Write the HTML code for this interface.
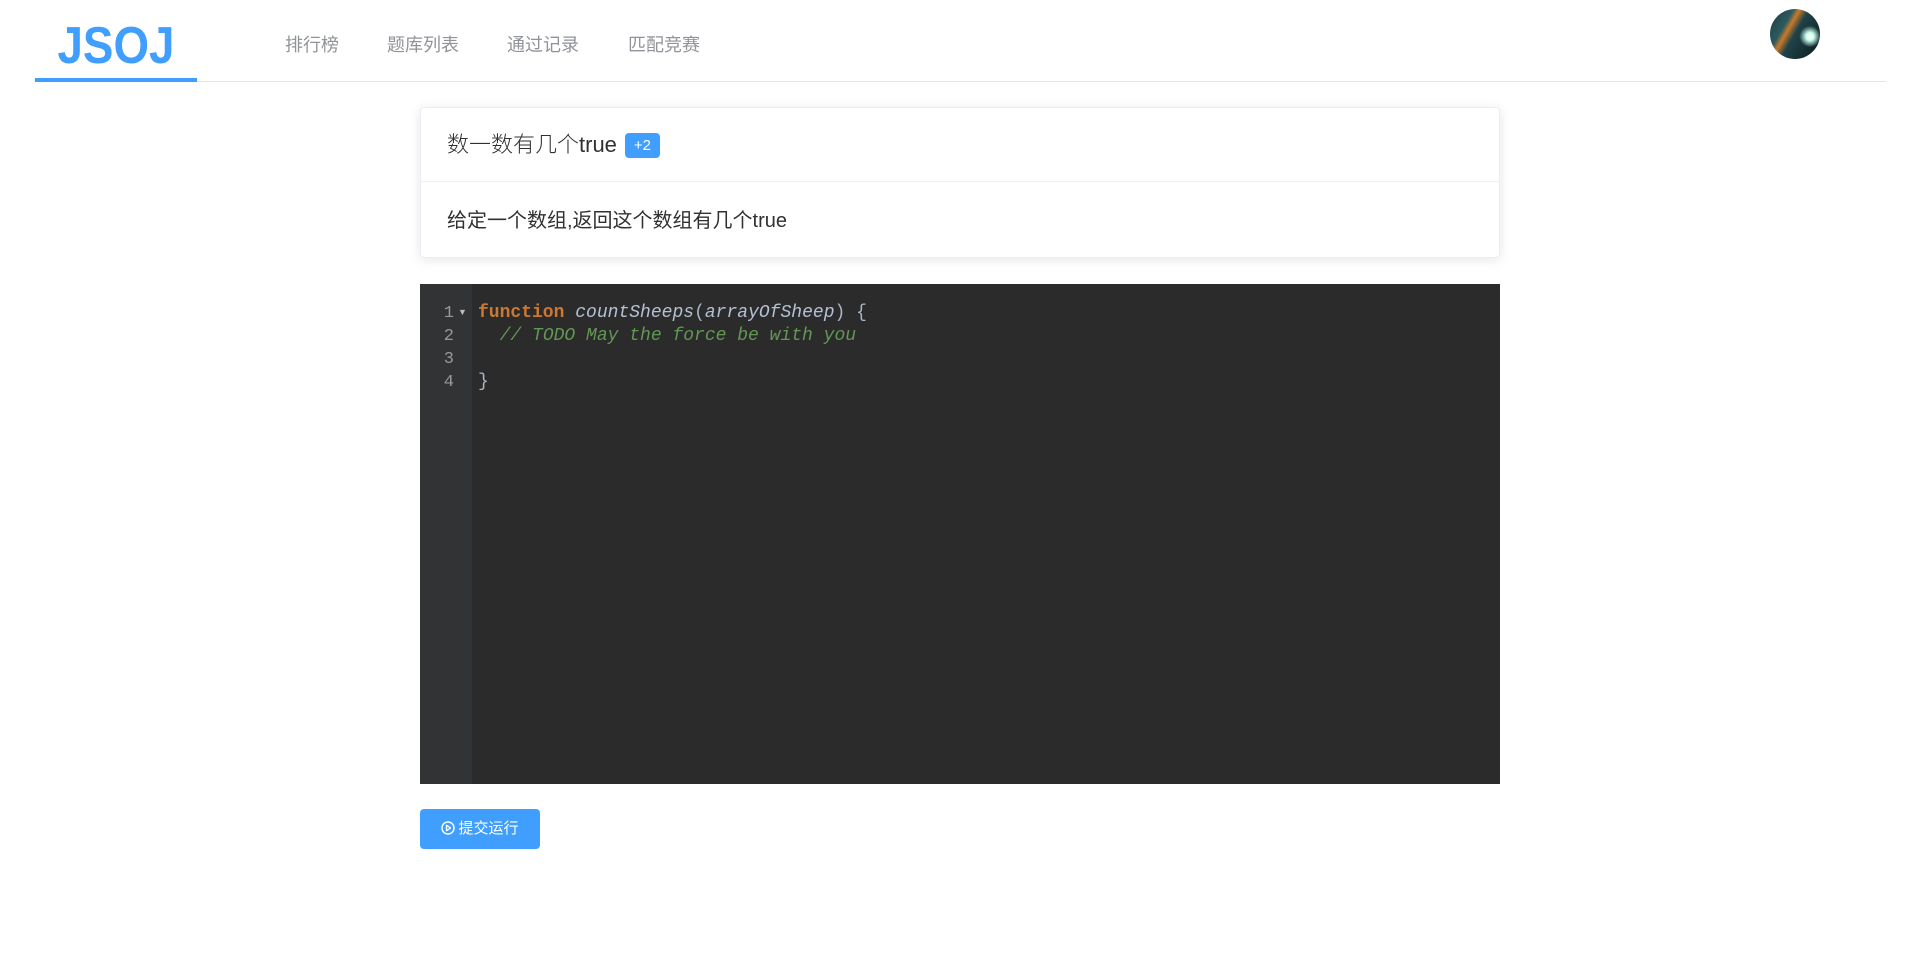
<!DOCTYPE html>
<html><head><meta charset="utf-8"><style>
*{margin:0;padding:0;box-sizing:border-box}
body{width:1920px;height:967px;background:#fff;font-family:"Liberation Sans","Noto Sans CJK SC",sans-serif;position:relative;overflow:hidden}
.hdr{position:absolute;left:35px;top:0;width:1851px;height:82px;border-bottom:1px solid #e6e6e6}
.logo{position:absolute;left:35px;top:0;width:162px;height:82px;border-bottom:4px solid #409eff}
.logo span{position:absolute;left:0;width:162px;top:0;color:#409eff;font-weight:bold;font-size:52px;text-align:center;line-height:92px;transform:scaleX(0.88)}
.nav{position:absolute;top:31px;font-size:18px;color:#909399}
.av{position:absolute;left:1770px;top:9px;width:50px;height:50px;border-radius:50%;background:radial-gradient(circle at 80% 55%,#fff 0,#cfe 8%,transparent 22%),linear-gradient(120deg,#1d3b40 0,#2c5a5f 30%,#c77a2a 38%,#1f4248 50%,#0c1a1c 100%)}
.card{position:absolute;left:420px;top:107px;width:1080px;height:151px;border:1px solid #ebeef5;border-radius:4px;box-shadow:0 2px 12px rgba(0,0,0,.1)}
.t{position:absolute;left:26px;top:19px;font-size:22px;color:#303133;font-weight:300}
.badge{display:inline-block;background:#409eff;color:#fff;font-size:15px;border-radius:4px;padding:0 9px;height:25px;line-height:25px;vertical-align:2px;margin-left:8px;font-weight:normal}
.dv{position:absolute;left:0;top:73px;width:100%;border-top:1px solid #ebeef5}
.b{position:absolute;left:26px;top:96px;font-size:20px;color:#303133}
.ed{position:absolute;left:420px;top:284px;width:1080px;height:500px;background:#2b2b2b}
.gut{position:absolute;left:0;top:0;width:52px;height:500px;background:#313335}
.ln{position:absolute;left:0;width:34px;text-align:right;color:#999;font:17px/23px "Liberation Mono",monospace}
.code{position:absolute;left:58px;top:18px;font:18px/23px "Liberation Mono","DejaVu Sans Mono",monospace;color:#a9b7c6;white-space:pre}
.k{color:#cc7832;font-weight:bold}.i{font-style:italic;color:#b3c0d6}.c{color:#629755;font-style:italic}
.btn{position:absolute;left:420px;top:809px;width:120px;height:40px;background:#409eff;border-radius:4px;color:#fff;font-size:15px;line-height:40px;text-align:center}
</style></head><body>
<div class="hdr"></div>
<div class="logo"><span>JSOJ</span></div>
<div class="nav" style="left:285px">排行榜</div>
<div class="nav" style="left:387px">题库列表</div>
<div class="nav" style="left:507px">通过记录</div>
<div class="nav" style="left:628px">匹配竞赛</div>
<div class="av"></div>
<div class="card">
<div class="t">数一数有几个true<span class="badge">+2</span></div>
<div class="dv"></div>
<div class="b">给定一个数组,返回这个数组有几个true</div>
</div>
<div class="ed"><div class="gut">
<div class="ln" style="top:18px">1</div><div style="position:absolute;left:38px;top:23px;color:#bbb;font-size:9px">▼</div>
<div class="ln" style="top:41px">2</div>
<div class="ln" style="top:64px">3</div>
<div class="ln" style="top:87px">4</div></div>
<div class="code"><span class="k">function</span> <span class="i">countSheeps</span>(<span class="i">arrayOfSheep</span>) {
  <span class="c">// TODO May the force be with you</span>

}</div></div>
<div class="btn"><svg width="14" height="14" viewBox="0 0 14 14" style="vertical-align:-2px;margin-right:3px"><circle cx="7" cy="7" r="6" fill="none" stroke="#fff" stroke-width="1.4"/><path d="M5.5 4.3v5.4L9.6 7z" fill="none" stroke="#fff" stroke-width="1.3" stroke-linejoin="round"/></svg>提交运行</div>
</body></html>
